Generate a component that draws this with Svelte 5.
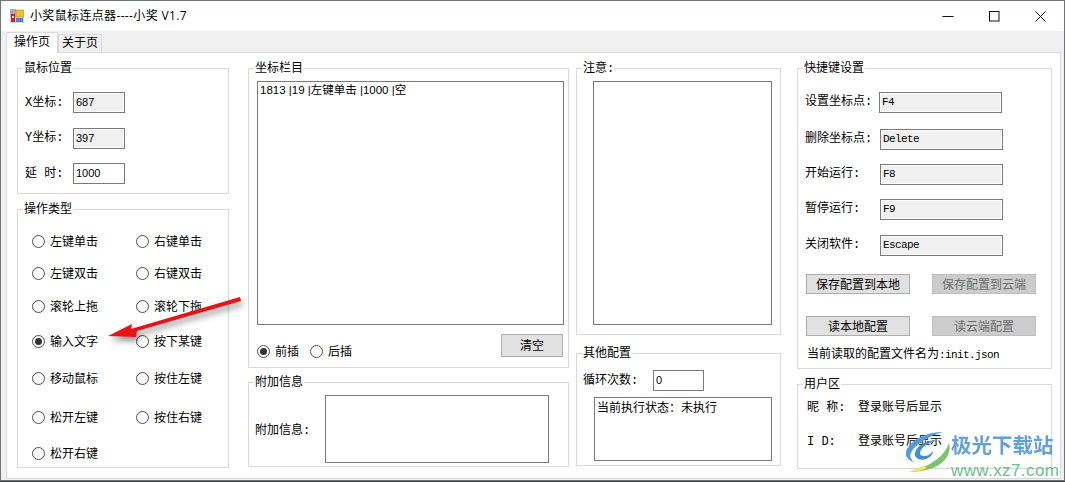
<script lang="ts">
  const mouseFields = [
    { label: 'X坐标:', value: '687', ro: true },
    { label: 'Y坐标:', value: '397', ro: true },
    { label: '延 时:', value: '1000', ro: false }
  ]
  const actions = [
    ['左键单击', '右键单击'],
    ['左键双击', '右键双击'],
    ['滚轮上拖', '滚轮下拖'],
    ['输入文字', '按下某键'],
    ['移动鼠标', '按住左键'],
    ['松开左键', '按住右键'],
    ['松开右键']
  ]
  const hotkeys = [
    { label: '设置坐标点:', value: 'F4' },
    { label: '删除坐标点:', value: 'Delete' },
    { label: '开始运行:', value: 'F8' },
    { label: '暂停运行:', value: 'F9' },
    { label: '关闭软件:', value: 'Escape' }
  ]
</script>

<div class="window">
  <header class="titlebar">
    <svg class="app-icon" width="14" height="14" viewBox="0 0 14 14">
      <rect x="0" y="0" width="6" height="14" fill="#a9a9a9" />
      <rect x="0" y="8" width="14" height="6" fill="#d4d4d4" />
      <rect x="1" y="5" width="4" height="8" fill="#c3262b" />
      <rect x="2" y="7" width="2" height="2" fill="#f3d6c8" />
      <rect x="6" y="1" width="8" height="7" fill="#f1bd2e" stroke="#b98f2a" stroke-width="0.6" />
      <rect x="6" y="9" width="7" height="4" fill="#4a86d8" />
    </svg>
    <span class="title">小奖鼠标连点器----小奖 V1.7</span>
    <div class="controls">
      <svg width="12" height="12" viewBox="0 0 12 12"><path d="M0.5 6.5h11" stroke="#111" /></svg>
      <svg width="11" height="11" viewBox="0 0 11 11"><rect x="0.5" y="0.5" width="9.5" height="9.5" fill="none" stroke="#111" /></svg>
      <svg width="11" height="11" viewBox="0 0 11 11"><path d="M0.5 0.5l10 10M10.5 0.5l-10 10" stroke="#111" /></svg>
    </div>
  </header>

  <div class="client">
    <div class="tabs">
      <div class="tab active">操作页</div>
      <div class="tab">关于页</div>
    </div>

    <main class="page">
      <div class="col col-1">
        <section class="group mouse">
          <span class="legend">鼠标位置</span>
          {#each mouseFields as f}
            <div class="row">
              <span class="lbl">{f.label}</span>
              <div class="field short num" class:ro={f.ro}>{f.value}</div>
            </div>
          {/each}
        </section>
        <section class="group actions">
          <span class="legend">操作类型</span>
          <div class="radio-grid">
            {#each actions as pair}
              {#each pair as a}
                <div class="radio">
                  <span class="dot" class:on={a === '输入文字'}></span>{a}
                </div>
              {/each}
              {#if pair.length === 1}<div></div>{/if}
            {/each}
          </div>
        </section>
      </div>

      <div class="col col-2">
        <section class="group coords">
          <span class="legend">坐标栏目</span>
          <div class="box list">1813 |19 |左键单击 |1000 |空</div>
          <div class="coord-foot">
            <div class="radio-row">
              <div class="radio"><span class="dot on"></span>前插</div>
              <div class="radio"><span class="dot"></span>后插</div>
            </div>
            <div class="btn clear">清空</div>
          </div>
        </section>
        <section class="group extra">
          <span class="legend">附加信息</span>
          <div class="extra-row">
            <span class="extra-lbl">附加信息:</span>
            <div class="box extra-box"></div>
          </div>
        </section>
      </div>

      <div class="col col-3">
        <section class="group notes">
          <span class="legend">注意:</span>
          <div class="box notes-box"></div>
        </section>
        <section class="group other">
          <span class="legend">其他配置</span>
          <div class="loop">
            <span class="loop-lbl">循环次数:</span>
            <div class="field loop-field">0</div>
          </div>
          <div class="box status">当前执行状态&#xFF1A;未执行</div>
        </section>
      </div>

      <div class="col col-4">
        <section class="group hotkeys">
          <span class="legend">快捷键设置</span>
          <div class="hotkey-grid">
            {#each hotkeys as h, i}
              <div class="hotkey">
                <span class="hk-lbl" class:first={i === 0}>{h.label}</span>
                <div class="field ro wide">{h.value}</div>
              </div>
            {/each}
          </div>
          <div class="btn-grid">
            <div class="btn">保存配置到本地</div>
            <div class="btn off">保存配置到云端</div>
            <div class="btn">读本地配置</div>
            <div class="btn off">读云端配置</div>
          </div>
          <div class="cfg">当前读取的配置文件名为<span class="cfg-name">:init.json</span></div>
        </section>
        <section class="group user">
          <span class="legend">用户区</span>
          <div class="user-row"><span class="user-lbl">昵 称:</span>登录账号后显示</div>
          <div class="user-row"><span class="user-lbl">I D:</span>登录账号后显示</div>
        </section>
      </div>
    </main>
  </div>

  <!-- annotation arrow drawn over the screenshot -->
  <svg class="arrow" width="1065" height="482" viewBox="0 0 1065 482">
    <polygon points="108,336 132,324 131,329 240,297 241,301 137,331 136,337" fill="#ea1219" />
  </svg>

  <!-- watermark -->
  <div class="mark">
    <svg class="mark-logo" width="46" height="42" viewBox="0 0 46 42">
      <path d="M38 1C24 1 8 7 2 18c-3 6 0 11 7 13-4-3-5-7-2-11C12 12 24 5 38 1z" fill="#4f9bdc" />
      <path d="M33 9C22 9 11 15 10 22c-1 5 5 8 11 6 5-2 7-5 7-8-2 3-5 5-9 5-4 0-5-3-3-6 3-5 10-8 17-10z" fill="#3f8fd2" />
      <path d="M44 12c3 10-4 20-16 25-9 3-17 4-24 4 8-3 17-5 24-10 8-5 13-11 16-19z" fill="#7cc36e" />
      <path d="M4 41c5-3 10-4 15-6l3 2c-6 3-12 4-18 4z" fill="#f1e36a" />
    </svg>
    <div class="mark-text">
      <div class="mark-cn">极光下载站</div>
      <div class="mark-en">www.xz7.com</div>
    </div>
  </div>
</div>

<style>
  :global(body) {
    margin: 0;
    background: #3c3f40;
  }
  .window {
    position: relative;
    box-sizing: border-box;
    width: 1065px;
    height: 481px;
    border: 1px solid #6f7475;
    background: #fff;
    overflow: hidden;
    font-family: "Liberation Mono", "Noto Sans CJK SC", monospace;
    font-size: 12px;
    line-height: 16px;
    color: #000;
  }

  .titlebar {
    display: flex;
    align-items: center;
    height: 30px;
    padding-left: 9px;
  }
  .app-icon { margin-right: 6px; }
  .title {
    font-family: "Open Sans", "Noto Sans CJK SC", sans-serif;
    letter-spacing: 0.35px;
  }
  .controls {
    display: flex;
    align-items: center;
    margin-left: auto;
    padding-right: 18px;
    gap: 35px;
  }

  .client {
    height: 449px;
    padding: 0 3px 0 5px;
    background: #f0f0f0;
  }
  .tabs {
    display: flex;
    align-items: flex-end;
    height: 21px;
  }
  .tab {
    box-sizing: border-box;
    display: flex;
    align-items: center;
    justify-content: center;
    width: 44px;
    height: 18px;
    border: 1px solid #d9d9d9;
    border-bottom: 0;
  }
  .tab.active {
    position: relative;
    z-index: 1;
    width: 52px;
    height: 21px;
    margin-bottom: -1px;
    background: #fff;
  }

  .page {
    box-sizing: border-box;
    display: flex;
    align-items: flex-start;
    height: 427px;
    padding: 15px 0 0 10px;
    border: 1px solid #d9d9d9;
    background: #fff;
  }
  .col { display: flex; flex-direction: column; flex: none; }
  .col-1 { width: 212px; gap: 15px; }
  .col-2 { width: 321px; margin-left: 19px; gap: 14px; }
  .col-3 { width: 205px; margin-left: 7px; gap: 18px; }
  .col-4 { width: 255px; margin-left: 16px; gap: 15px; }

  .group {
    position: relative;
    box-sizing: border-box;
    border: 1px solid #d9d9d9;
  }
  .legend {
    position: absolute;
    top: -8px;
    left: 5px;
    padding: 0 1px;
    background: #fff;
  }

  .field {
    box-sizing: border-box;
    height: 21px;
    padding: 1px 0 0 2px;
    border: 1px solid #7a7a7a;
    font-size: 11px;
    letter-spacing: -0.6px;
    line-height: 16px;
  }
  .field.ro {
    background: #f0f0f0;
    box-shadow: inset 0 0 0 1px #fff;
  }
  .field.num {
    font-family: "Liberation Sans", sans-serif;
    letter-spacing: 0;
  }
  .short { width: 52px; }
  .wide { width: 123px; }

  .box {
    box-sizing: border-box;
    border: 1px solid #7a7a7a;
  }

  .mouse {
    display: flex;
    flex-direction: column;
    gap: 14.5px;
    height: 126px;
    padding: 23px 0 0 7px;
  }
  .row { display: flex; align-items: center; }
  .lbl { width: 48px; }

  .actions { height: 259px; padding: 21px 0 0 14px; }
  .radio-grid {
    display: grid;
    grid-template-columns: 104px 70px;
    grid-template-rows: 32px 33px 35px 37px 39px 36px 20px;
  }
  .radio {
    display: flex;
    align-items: center;
    gap: 5px;
    height: 20px;
    font-family: "Noto Sans CJK SC", sans-serif;
  }
  .dot {
    box-sizing: border-box;
    display: flex;
    align-items: center;
    justify-content: center;
    flex: none;
    width: 13px;
    height: 13px;
    border: 1px solid #4d4d4d;
    border-radius: 50%;
  }
  .dot.on::after {
    content: "";
    width: 7px;
    height: 7px;
    border-radius: 50%;
    background: #333;
  }

  .coords { height: 300px; padding: 12px 0 0 8px; }
  .list {
    width: 307px;
    height: 244px;
    padding: 0 2px;
    font-family: "Liberation Sans", "Noto Sans CJK SC", sans-serif;
    font-size: 11.5px;
  }
  .coord-foot {
    display: flex;
    justify-content: space-between;
    width: 306px;
    margin-top: 9px;
  }
  .radio-row {
    display: flex;
    gap: 11px;
    padding-top: 7px;
  }
  .btn {
    box-sizing: border-box;
    display: flex;
    align-items: center;
    justify-content: center;
    height: 20px;
    border: 1px solid #adadad;
    background: #e1e1e1;
    font-family: "Noto Sans CJK SC", sans-serif;
  }
  .btn.off {
    border-color: #bfbfbf;
    background: #cccccc;
    color: #6d6d6d;
  }
  .clear { width: 62px; height: 23px; padding-bottom: 2px; }

  .extra { height: 85px; padding: 12px 0 0 6px; }
  .extra-row { display: flex; align-items: center; }
  .extra-lbl { width: 70px; padding-top: 4px; }
  .extra-box { width: 224px; height: 68px; }

  .notes { height: 267px; padding: 12px 0 0 16px; }
  .notes-box { width: 179px; height: 244px; }

  .other { height: 113px; padding: 16px 0 0 6px; }
  .loop { display: flex; align-items: center; }
  .loop-lbl { width: 70px; }
  .loop-field {
    width: 51px;
    font-family: "Liberation Sans", sans-serif;
    letter-spacing: 0;
  }
  .status {
    width: 178px;
    height: 64px;
    margin: 6px 0 0 11px;
    padding: 1px 2px;
    font-family: "Noto Sans CJK SC", sans-serif;
  }

  .hotkeys { height: 301px; padding: 23px 0 0 7px; }
  .hotkey-grid {
    display: grid;
    grid-template-rows: 37px 35px 35px 36px 21px;
  }
  .hotkey { display: flex; align-items: flex-start; }
  .hk-lbl { width: 75px; line-height: 21px; }
  .hk-lbl.first { width: 74px; }
  .btn-grid {
    display: grid;
    grid-template-columns: 104px 104px;
    grid-template-rows: 20px 20px;
    column-gap: 22px;
    row-gap: 22px;
    margin: 18px 0 0 1px;
  }
  .cfg { margin: 11px 0 0 2px; }
  .cfg-name {
    font-size: 11px;
    letter-spacing: -0.6px;
  }

  .user { height: 85px; padding: 15px 0 0 9px; }
  .user-row {
    display: flex;
    margin-bottom: 18px;
  }
  .user-lbl { width: 51px; }

  .arrow {
    position: absolute;
    top: -1px;
    left: -1px;
    pointer-events: none;
    filter: drop-shadow(2px 4px 3px rgba(0, 0, 0, 0.45));
  }

  .mark {
    position: absolute;
    top: 430px;
    left: 904px;
    display: flex;
  }
  .mark-logo { flex: none; }
  .mark-text { padding-top: 1px; }
  .mark-cn {
    font-family: "Noto Sans CJK SC", sans-serif;
    font-size: 20.5px;
    font-weight: 700;
    line-height: 24px;
    color: #5d9bd6;
    opacity: 0.95;
  }
  .mark-en {
    margin-top: 6px;
    font-family: "Liberation Sans", sans-serif;
    font-size: 17px;
    line-height: 18px;
    letter-spacing: 0.4px;
    color: #6cc08b;
  }
</style>
